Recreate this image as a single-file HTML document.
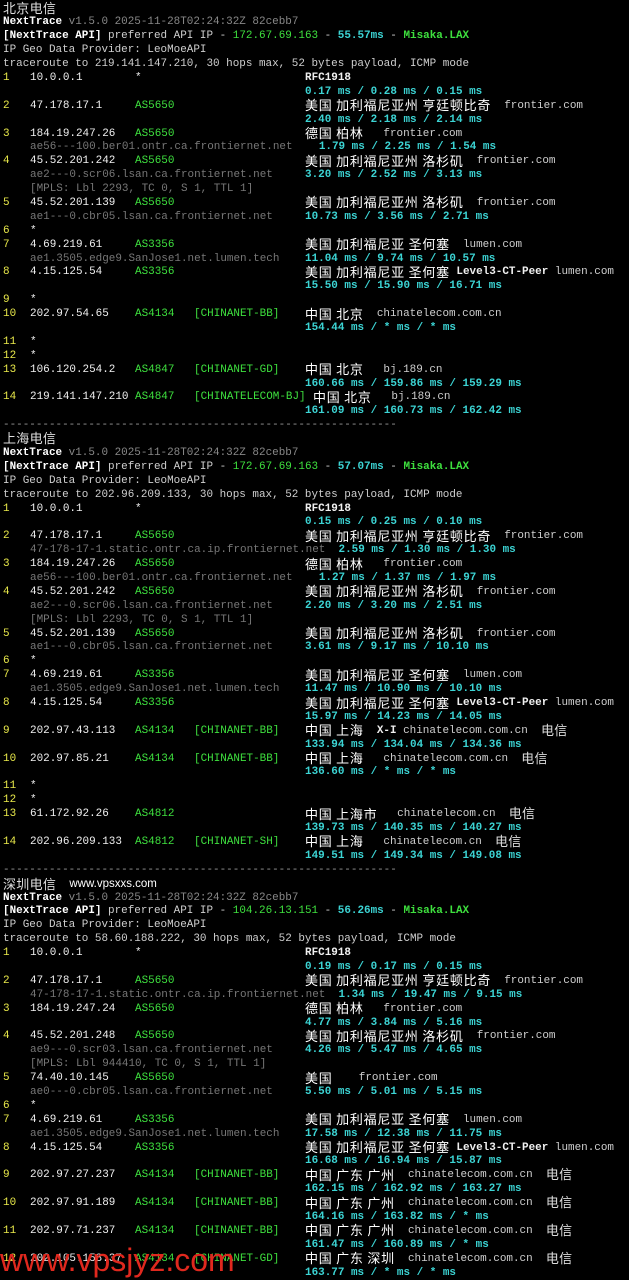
<!DOCTYPE html>
<html><head><meta charset="utf-8"><style>
html,body{margin:0;padding:0;background:#000;width:629px;height:1280px;overflow:hidden}
body{font-family:"Liberation Mono","Noto Sans CJK SC",monospace;font-size:10.95px;color:#cfcfcf;position:relative;padding-top:2.5px;box-sizing:border-box}
.l{position:relative;height:13.9px;line-height:13.9px;white-space:pre}
.l span{position:absolute;top:0;white-space:pre}
.t{left:3px}
.n{left:3px;color:#e8e84a}
.ip{left:30px;color:#f0f0f0}
.as{left:135px;color:#3ee03e}
.tg{left:194px;color:#3ee03e}
.g{left:305px;color:#f0f0f0}
.h{left:30px;color:#777}
.m{color:#3cd4d4;font-weight:bold}
.ms{left:305px;color:#3cd4d4;font-weight:bold}
.c{font-style:normal;font-family:"Noto Sans CJK SC",sans-serif;font-size:13px;line-height:0;letter-spacing:0.75px;font-weight:normal;color:#fff;position:relative;top:2.5px}
.cn{font-style:normal;font-family:"Noto Sans CJK SC",sans-serif;font-size:13px;line-height:0;letter-spacing:0.3px;color:#ddd;position:relative;top:2px}
.d{color:#cfcfcf;font-weight:normal}
.b{font-weight:bold;color:#fff}
.gr{color:#888}
.gn{color:#3ee03e}
.gb{color:#3ee03e;font-weight:bold}
.cy{color:#3cd4d4;font-weight:bold}
.wm{position:absolute;left:0;top:1242px;font-family:"Liberation Sans",sans-serif;font-size:32px;color:#e0281e}
</style></head><body>
<div class=l><span class=t><i class=cn>北京电信</i></span></div>
<div class=l><span class=t><b class=b>NextTrace</b> <span class=gr style="position:static">v1.5.0 2025-11-28T02:24:32Z 82cebb7</span></span></div>
<div class=l><span class=t><b class=b>[NextTrace API]</b> preferred API IP - <b class=gn style="font-weight:normal">172.67.69.163</b> - <b class=cy>55.57ms</b> - <b class=gb>Misaka.LAX</b></span></div>
<div class=l><span class=t>IP Geo Data Provider: LeoMoeAPI</span></div>
<div class=l><span class=t>traceroute to 219.141.147.210, 30 hops max, 52 bytes payload, ICMP mode</span></div>
<div class=l><span class=n>1</span><span class=ip>10.0.0.1</span><span class=as style="color:#eee">*</span><span class=g><b>RFC1918</b></span></div>
<div class=l><span class=ms>0.17 ms / 0.28 ms / 0.15 ms</span></div>
<div class=l><span class=n>2</span><span class=ip>47.178.17.1</span><span class=as>AS5650</span><span class=g><i class=c>美国 加利福尼亚州 亨廷顿比奇</i>  <b class=d>frontier.com</b></span></div>
<div class=l><span class=ms>2.40 ms / 2.18 ms / 2.14 ms</span></div>
<div class=l><span class=n>3</span><span class=ip>184.19.247.26</span><span class=as>AS5650</span><span class=g><i class=c>德国 柏林</i>   <b class=d>frontier.com</b></span></div>
<div class=l><span class=h>ae56---100.ber01.ontr.ca.frontiernet.net    <b class=m>1.79 ms / 2.25 ms / 1.54 ms</b></span></div>
<div class=l><span class=n>4</span><span class=ip>45.52.201.242</span><span class=as>AS5650</span><span class=g><i class=c>美国 加利福尼亚州 洛杉矶</i>  <b class=d>frontier.com</b></span></div>
<div class=l><span class=h>ae2---0.scr06.lsan.ca.frontiernet.net</span><span class=ms>3.20 ms / 2.52 ms / 3.13 ms</span></div>
<div class=l><span class=h>[MPLS: Lbl 2293, TC 0, S 1, TTL 1]</span></div>
<div class=l><span class=n>5</span><span class=ip>45.52.201.139</span><span class=as>AS5650</span><span class=g><i class=c>美国 加利福尼亚州 洛杉矶</i>  <b class=d>frontier.com</b></span></div>
<div class=l><span class=h>ae1---0.cbr05.lsan.ca.frontiernet.net</span><span class=ms>10.73 ms / 3.56 ms / 2.71 ms</span></div>
<div class=l><span class=n>6</span><span class=ip>*</span></div>
<div class=l><span class=n>7</span><span class=ip>4.69.219.61</span><span class=as>AS3356</span><span class=g><i class=c>美国 加利福尼亚 圣何塞</i>  <b class=d>lumen.com</b></span></div>
<div class=l><span class=h>ae1.3505.edge9.SanJose1.net.lumen.tech</span><span class=ms>11.04 ms / 9.74 ms / 10.57 ms</span></div>
<div class=l><span class=n>8</span><span class=ip>4.15.125.54</span><span class=as>AS3356</span><span class=g><i class=c>美国 加利福尼亚 圣何塞</i> <b>Level3-CT-Peer</b> <b class=d>lumen.com</b></span></div>
<div class=l><span class=ms>15.50 ms / 15.90 ms / 16.71 ms</span></div>
<div class=l><span class=n>9</span><span class=ip>*</span></div>
<div class=l><span class=n>10</span><span class=ip>202.97.54.65</span><span class=as>AS4134</span><span class=tg>[CHINANET-BB]</span><span class=g><i class=c>中国 北京</i>  <b class=d>chinatelecom.com.cn</b></span></div>
<div class=l><span class=ms>154.44 ms / * ms / * ms</span></div>
<div class=l><span class=n>11</span><span class=ip>*</span></div>
<div class=l><span class=n>12</span><span class=ip>*</span></div>
<div class=l><span class=n>13</span><span class=ip>106.120.254.2</span><span class=as>AS4847</span><span class=tg>[CHINANET-GD]</span><span class=g><i class=c>中国 北京</i>   <b class=d>bj.189.cn</b></span></div>
<div class=l><span class=ms>160.66 ms / 159.86 ms / 159.29 ms</span></div>
<div class=l><span class=n>14</span><span class=ip>219.141.147.210</span><span class=as>AS4847</span><span class=tg>[CHINATELECOM-BJ]</span><span class=g style="left:313px"><i class=c>中国 北京</i>   <b class=d>bj.189.cn</b></span></div>
<div class=l><span class=ms>161.09 ms / 160.73 ms / 162.42 ms</span></div>
<div class=l><span class=t style="color:#999">------------------------------------------------------------</span></div>
<div class=l><span class=t><i class=cn>上海电信</i></span></div>
<div class=l><span class=t><b class=b>NextTrace</b> <span class=gr style="position:static">v1.5.0 2025-11-28T02:24:32Z 82cebb7</span></span></div>
<div class=l><span class=t><b class=b>[NextTrace API]</b> preferred API IP - <b class=gn style="font-weight:normal">172.67.69.163</b> - <b class=cy>57.07ms</b> - <b class=gb>Misaka.LAX</b></span></div>
<div class=l><span class=t>IP Geo Data Provider: LeoMoeAPI</span></div>
<div class=l><span class=t>traceroute to 202.96.209.133, 30 hops max, 52 bytes payload, ICMP mode</span></div>
<div class=l><span class=n>1</span><span class=ip>10.0.0.1</span><span class=as style="color:#eee">*</span><span class=g><b>RFC1918</b></span></div>
<div class=l><span class=ms>0.15 ms / 0.25 ms / 0.10 ms</span></div>
<div class=l><span class=n>2</span><span class=ip>47.178.17.1</span><span class=as>AS5650</span><span class=g><i class=c>美国 加利福尼亚州 亨廷顿比奇</i>  <b class=d>frontier.com</b></span></div>
<div class=l><span class=h>47-178-17-1.static.ontr.ca.ip.frontiernet.net  <b class=m>2.59 ms / 1.30 ms / 1.30 ms</b></span></div>
<div class=l><span class=n>3</span><span class=ip>184.19.247.26</span><span class=as>AS5650</span><span class=g><i class=c>德国 柏林</i>   <b class=d>frontier.com</b></span></div>
<div class=l><span class=h>ae56---100.ber01.ontr.ca.frontiernet.net    <b class=m>1.27 ms / 1.37 ms / 1.97 ms</b></span></div>
<div class=l><span class=n>4</span><span class=ip>45.52.201.242</span><span class=as>AS5650</span><span class=g><i class=c>美国 加利福尼亚州 洛杉矶</i>  <b class=d>frontier.com</b></span></div>
<div class=l><span class=h>ae2---0.scr06.lsan.ca.frontiernet.net</span><span class=ms>2.20 ms / 3.20 ms / 2.51 ms</span></div>
<div class=l><span class=h>[MPLS: Lbl 2293, TC 0, S 1, TTL 1]</span></div>
<div class=l><span class=n>5</span><span class=ip>45.52.201.139</span><span class=as>AS5650</span><span class=g><i class=c>美国 加利福尼亚州 洛杉矶</i>  <b class=d>frontier.com</b></span></div>
<div class=l><span class=h>ae1---0.cbr05.lsan.ca.frontiernet.net</span><span class=ms>3.61 ms / 9.17 ms / 10.10 ms</span></div>
<div class=l><span class=n>6</span><span class=ip>*</span></div>
<div class=l><span class=n>7</span><span class=ip>4.69.219.61</span><span class=as>AS3356</span><span class=g><i class=c>美国 加利福尼亚 圣何塞</i>  <b class=d>lumen.com</b></span></div>
<div class=l><span class=h>ae1.3505.edge9.SanJose1.net.lumen.tech</span><span class=ms>11.47 ms / 10.90 ms / 10.10 ms</span></div>
<div class=l><span class=n>8</span><span class=ip>4.15.125.54</span><span class=as>AS3356</span><span class=g><i class=c>美国 加利福尼亚 圣何塞</i> <b>Level3-CT-Peer</b> <b class=d>lumen.com</b></span></div>
<div class=l><span class=ms>15.97 ms / 14.23 ms / 14.05 ms</span></div>
<div class=l><span class=n>9</span><span class=ip>202.97.43.113</span><span class=as>AS4134</span><span class=tg>[CHINANET-BB]</span><span class=g><i class=c>中国 上海</i>  <b>X-I</b> <b class=d>chinatelecom.com.cn</b>  <i class=cn>电信</i></span></div>
<div class=l><span class=ms>133.94 ms / 134.04 ms / 134.36 ms</span></div>
<div class=l><span class=n>10</span><span class=ip>202.97.85.21</span><span class=as>AS4134</span><span class=tg>[CHINANET-BB]</span><span class=g><i class=c>中国 上海</i>   <b class=d>chinatelecom.com.cn</b>  <i class=cn>电信</i></span></div>
<div class=l><span class=ms>136.60 ms / * ms / * ms</span></div>
<div class=l><span class=n>11</span><span class=ip>*</span></div>
<div class=l><span class=n>12</span><span class=ip>*</span></div>
<div class=l><span class=n>13</span><span class=ip>61.172.92.26</span><span class=as>AS4812</span><span class=g><i class=c>中国 上海市</i>   <b class=d>chinatelecom.cn</b>  <i class=cn>电信</i></span></div>
<div class=l><span class=ms>139.73 ms / 140.35 ms / 140.27 ms</span></div>
<div class=l><span class=n>14</span><span class=ip>202.96.209.133</span><span class=as>AS4812</span><span class=tg>[CHINANET-SH]</span><span class=g><i class=c>中国 上海</i>   <b class=d>chinatelecom.cn</b>  <i class=cn>电信</i></span></div>
<div class=l><span class=ms>149.51 ms / 149.34 ms / 149.08 ms</span></div>
<div class=l><span class=t style="color:#999">------------------------------------------------------------</span></div>
<div class=l><span class=t><i class=cn>深圳电信</i>  <b style="font-family:'Liberation Sans',sans-serif;font-size:11.5px;color:#fff;font-weight:normal">www.vpsxxs.com</b></span></div>
<div class=l><span class=t><b class=b>NextTrace</b> <span class=gr style="position:static">v1.5.0 2025-11-28T02:24:32Z 82cebb7</span></span></div>
<div class=l><span class=t><b class=b>[NextTrace API]</b> preferred API IP - <b class=gn style="font-weight:normal">104.26.13.151</b> - <b class=cy>56.26ms</b> - <b class=gb>Misaka.LAX</b></span></div>
<div class=l><span class=t>IP Geo Data Provider: LeoMoeAPI</span></div>
<div class=l><span class=t>traceroute to 58.60.188.222, 30 hops max, 52 bytes payload, ICMP mode</span></div>
<div class=l><span class=n>1</span><span class=ip>10.0.0.1</span><span class=as style="color:#eee">*</span><span class=g><b>RFC1918</b></span></div>
<div class=l><span class=ms>0.19 ms / 0.17 ms / 0.15 ms</span></div>
<div class=l><span class=n>2</span><span class=ip>47.178.17.1</span><span class=as>AS5650</span><span class=g><i class=c>美国 加利福尼亚州 亨廷顿比奇</i>  <b class=d>frontier.com</b></span></div>
<div class=l><span class=h>47-178-17-1.static.ontr.ca.ip.frontiernet.net  <b class=m>1.34 ms / 19.47 ms / 9.15 ms</b></span></div>
<div class=l><span class=n>3</span><span class=ip>184.19.247.24</span><span class=as>AS5650</span><span class=g><i class=c>德国 柏林</i>   <b class=d>frontier.com</b></span></div>
<div class=l><span class=ms>4.77 ms / 3.84 ms / 5.16 ms</span></div>
<div class=l><span class=n>4</span><span class=ip>45.52.201.248</span><span class=as>AS5650</span><span class=g><i class=c>美国 加利福尼亚州 洛杉矶</i>  <b class=d>frontier.com</b></span></div>
<div class=l><span class=h>ae9---0.scr03.lsan.ca.frontiernet.net</span><span class=ms>4.26 ms / 5.47 ms / 4.65 ms</span></div>
<div class=l><span class=h>[MPLS: Lbl 944410, TC 0, S 1, TTL 1]</span></div>
<div class=l><span class=n>5</span><span class=ip>74.40.10.145</span><span class=as>AS5650</span><span class=g><i class=c>美国</i>    <b class=d>frontier.com</b></span></div>
<div class=l><span class=h>ae0---0.cbr05.lsan.ca.frontiernet.net</span><span class=ms>5.50 ms / 5.01 ms / 5.15 ms</span></div>
<div class=l><span class=n>6</span><span class=ip>*</span></div>
<div class=l><span class=n>7</span><span class=ip>4.69.219.61</span><span class=as>AS3356</span><span class=g><i class=c>美国 加利福尼亚 圣何塞</i>  <b class=d>lumen.com</b></span></div>
<div class=l><span class=h>ae1.3505.edge9.SanJose1.net.lumen.tech</span><span class=ms>17.58 ms / 12.38 ms / 11.75 ms</span></div>
<div class=l><span class=n>8</span><span class=ip>4.15.125.54</span><span class=as>AS3356</span><span class=g><i class=c>美国 加利福尼亚 圣何塞</i> <b>Level3-CT-Peer</b> <b class=d>lumen.com</b></span></div>
<div class=l><span class=ms>16.68 ms / 16.94 ms / 15.87 ms</span></div>
<div class=l><span class=n>9</span><span class=ip>202.97.27.237</span><span class=as>AS4134</span><span class=tg>[CHINANET-BB]</span><span class=g><i class=c>中国 广东 广州</i>  <b class=d>chinatelecom.com.cn</b>  <i class=cn>电信</i></span></div>
<div class=l><span class=ms>162.15 ms / 162.92 ms / 163.27 ms</span></div>
<div class=l><span class=n>10</span><span class=ip>202.97.91.189</span><span class=as>AS4134</span><span class=tg>[CHINANET-BB]</span><span class=g><i class=c>中国 广东 广州</i>  <b class=d>chinatelecom.com.cn</b>  <i class=cn>电信</i></span></div>
<div class=l><span class=ms>164.16 ms / 163.82 ms / * ms</span></div>
<div class=l><span class=n>11</span><span class=ip>202.97.71.237</span><span class=as>AS4134</span><span class=tg>[CHINANET-BB]</span><span class=g><i class=c>中国 广东 广州</i>  <b class=d>chinatelecom.com.cn</b>  <i class=cn>电信</i></span></div>
<div class=l><span class=ms>161.47 ms / 160.89 ms / * ms</span></div>
<div class=l><span class=n>12</span><span class=ip>202.105.158.37</span><span class=as>AS4134</span><span class=tg>[CHINANET-GD]</span><span class=g><i class=c>中国 广东 深圳</i>  <b class=d>chinatelecom.com.cn</b>  <i class=cn>电信</i></span></div>
<div class=l><span class=ms>163.77 ms / * ms / * ms</span></div>
<div class=wm>www.vpsjyz.com</div>
</body></html>
